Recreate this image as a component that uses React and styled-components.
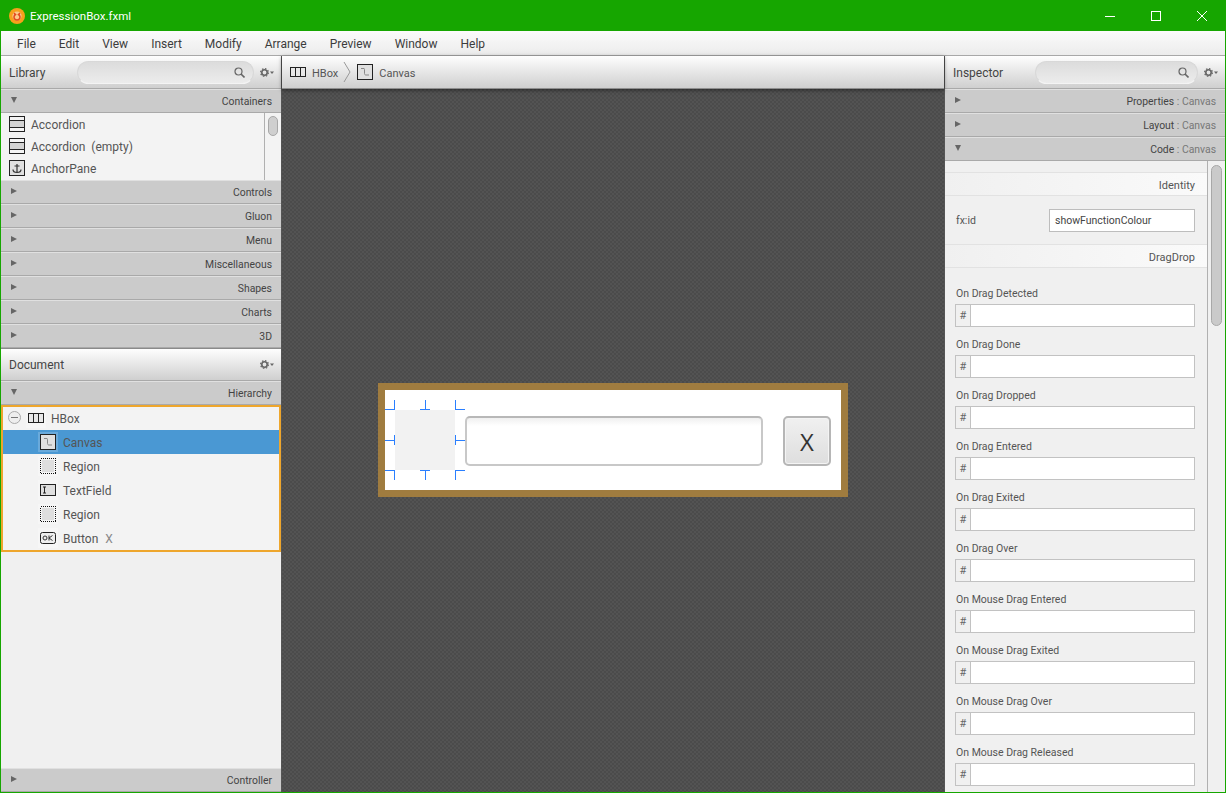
import React from "react";
import styled, { createGlobalStyle } from "styled-components";

const GlobalStyle = createGlobalStyle`
  html, body {
    margin: 0;
    padding: 0;
    height: 100%;
    overflow: hidden;
    font-family: Roboto, "Open Sans", sans-serif;
    font-size: 12px;
    color: #444;
  }
  * { box-sizing: border-box; }
`;

const MENU = ["File", "Edit", "View", "Insert", "Modify", "Arrange", "Preview", "Window", "Help"];
const LIBRARY_SECTIONS = ["Controls", "Gluon", "Menu", "Miscellaneous", "Shapes", "Charts", "3D"];
const EVENTS = [
  "On Drag Detected",
  "On Drag Done",
  "On Drag Dropped",
  "On Drag Entered",
  "On Drag Exited",
  "On Drag Over",
  "On Mouse Drag Entered",
  "On Mouse Drag Exited",
  "On Mouse Drag Over",
  "On Mouse Drag Released",
];

const Frame = ({ children }) => (
  <svg width="16" height="16" viewBox="0 0 16 16">
    <rect x="0.5" y="0.5" width="15" height="15" fill="#e0e0e0" stroke="#222" />
    {children}
  </svg>
);

const AccordionIcon = () => (
  <svg width="16" height="16" viewBox="0 0 16 16" shapeRendering="crispEdges">
    <rect x="0.5" y="0.5" width="15" height="15" fill="#f4f4f4" stroke="#222" />
    <rect x="1" y="5" width="14" height="6" fill="#d2d2d2" />
    <path d="M0 4.5h16M0 11.5h16" stroke="#222" />
  </svg>
);

const AnchorIcon = () => (
  <Frame>
    <path d="M8 4v8.5M5.5 6h5M4 9.5c0 2 2 3 4 3s4-1 4-3" fill="none" stroke="#333" strokeWidth="1.2" />
  </Frame>
);

const HBoxIcon = () => (
  <svg width="16" height="10" viewBox="0 0 16 10">
    <rect x="0.5" y="0.5" width="15" height="9" fill="#e8e8e8" stroke="#222" />
    <path d="M5.5 0v10M10.5 0v10" stroke="#222" />
  </svg>
);

const CanvasIcon = () => (
  <Frame>
    <path d="M4 4.5h3c.5 0 .5.5.5 1v4c0 1 .5 1.5 1.5 1.5h3" fill="none" stroke="#888" />
  </Frame>
);

const RegionIcon = () => (
  <svg width="16" height="16" viewBox="0 0 16 16" shapeRendering="crispEdges">
    <rect x="2" y="2" width="12" height="12" fill="#dedede" />
    <rect x="0.5" y="0.5" width="15" height="15" fill="none" stroke="#111" strokeDasharray="1 1" />
  </svg>
);

const TextFieldIcon = () => (
  <svg width="16" height="12" viewBox="0 0 16 12">
    <rect x="0.5" y="0.5" width="15" height="11" fill="#e0e0e0" stroke="#222" />
    <path d="M3 3h3M3 9h3M4.5 3v6" stroke="#222" />
  </svg>
);

const ButtonIcon = () => (
  <svg width="16" height="12" viewBox="0 0 16 12">
    <rect x="0.5" y="0.5" width="15" height="11" rx="2" fill="#eee" stroke="#222" />
    <circle cx="5" cy="6" r="2" fill="none" stroke="#333" />
    <path d="M9 3.5v5M12.5 3.5L9 6l3.5 2.5" fill="none" stroke="#333" />
  </svg>
);

const SearchIcon = () => (
  <svg width="11" height="11" viewBox="0 0 11 11">
    <circle cx="4.5" cy="4.5" r="3.5" fill="none" stroke="#666" strokeWidth="1.2" />
    <path d="M7 7l3.5 3.5" stroke="#666" strokeWidth="1.6" />
  </svg>
);

const GearIcon = () => (
  <svg width="14" height="9" viewBox="0 0 14 9">
    <circle cx="4.5" cy="4.5" r="2.7" fill="none" stroke="#666" strokeWidth="1.6" />
    <circle cx="4.5" cy="4.5" r="3.9" fill="none" stroke="#666" strokeWidth="1.2" strokeDasharray="1.5 1.56" />
    <path d="M10 3.5h4l-2 2.4z" fill="#666" />
  </svg>
);

const AppLogo = () => (
  <svg width="16" height="16" viewBox="0 0 16 16">
    <circle cx="8" cy="8" r="8" fill="#f7a01c" />
    <circle cx="8" cy="8" r="4.6" fill="#fbc98a" />
    <path d="M5 5l1.5 1.5a3 3 0 1 0 3 0L11 5" fill="none" stroke="#e2481e" strokeWidth="1.5" />
  </svg>
);

const WindowButton = ({ kind }) => (
  <svg width="12" height="12" viewBox="0 0 12 12">
    {kind === "min" && <path d="M1 6.5h10" stroke="#fff" />}
    {kind === "max" && <rect x="1.5" y="1.5" width="9" height="9" fill="none" stroke="#fff" />}
    {kind === "close" && <path d="M1 1l10 10M11 1L1 11" stroke="#fff" />}
  </svg>
);

const Section = ({ open, children }) => (
  <SectionBar>
    <Arrow $open={open} />
    <SectionTitle>{children}</SectionTitle>
  </SectionBar>
);

const SearchHeader = ({ title }) => (
  <PanelHeader>
    <SearchTitle>{title}</SearchTitle>
    <SearchPill>
      <SearchIcon />
    </SearchPill>
    <GearIcon />
  </PanelHeader>
);

const App = () => {
  return (
    <Window>
      <GlobalStyle />
      <TitleBar>
        <AppLogo />
        <WindowName>ExpressionBox.fxml</WindowName>
        <WindowButtons>
          <WindowButton kind="min" />
          <WindowButton kind="max" />
          <WindowButton kind="close" />
        </WindowButtons>
      </TitleBar>
      <MenuBar>
        {MENU.map((m) => (
          <span key={m}>{m}</span>
        ))}
      </MenuBar>
      <Workspace>
        <SidePanel>
          <SearchHeader title="Library" />
          <Section open>Containers</Section>
          <LibraryList>
            <LibraryItems>
              <LibraryItem><AccordionIcon />Accordion</LibraryItem>
              <LibraryItem><AccordionIcon />Accordion&nbsp; (empty)</LibraryItem>
              <LibraryItem><AnchorIcon />AnchorPane</LibraryItem>
            </LibraryItems>
            <ListScroll>
              <ListThumb />
            </ListScroll>
          </LibraryList>
          {LIBRARY_SECTIONS.map((s) => (
            <Section key={s}>{s}</Section>
          ))}
          <DocumentHeader>
            <PanelTitle>Document</PanelTitle>
            <GearIcon />
          </DocumentHeader>
          <Section open>Hierarchy</Section>
          <Tree>
            <RootRow>
              <Collapse />
              <TreeIcon><HBoxIcon /></TreeIcon>
              HBox
            </RootRow>
            <TreeRow $selected>
              <TreeIcon $selected><CanvasIcon /></TreeIcon>
              Canvas
            </TreeRow>
            <TreeRow>
              <TreeIcon><RegionIcon /></TreeIcon>
              Region
            </TreeRow>
            <TreeRow>
              <TreeIcon><TextFieldIcon /></TreeIcon>
              TextField
            </TreeRow>
            <TreeRow>
              <TreeIcon><RegionIcon /></TreeIcon>
              Region
            </TreeRow>
            <TreeRow>
              <TreeIcon><ButtonIcon /></TreeIcon>
              Button <TreeHint>X</TreeHint>
            </TreeRow>
          </Tree>
          <Spacer />
          <Section>Controller</Section>
        </SidePanel>

        <Center>
          <Breadcrumb>
            <CrumbIcon><HBoxIcon /></CrumbIcon>
            <span>HBox</span>
            <svg width="8" height="22" viewBox="0 0 8 22">
              <path d="M1 1l6 10-6 10" fill="none" stroke="#999" />
            </svg>
            <CrumbIcon><CanvasIcon /></CrumbIcon>
            <span>Canvas</span>
          </Breadcrumb>
          <Stage>
            <DesignRoot>
              <CanvasNode>
                <Handle $x="-10px" $y="-10px" $corner="tl" />
                <Handle $x="calc(50% - 5px)" $y="-10px" $corner="t" />
                <Handle $x="100%" $y="-10px" $corner="tr" />
                <Handle $x="-10px" $y="calc(50% - 5px)" $corner="l" />
                <Handle $x="100%" $y="calc(50% - 5px)" $corner="r" />
                <Handle $x="-10px" $y="100%" $corner="bl" />
                <Handle $x="calc(50% - 5px)" $y="100%" $corner="b" />
                <Handle $x="100%" $y="100%" $corner="br" />
              </CanvasNode>
              <DesignField />
              <DesignButton>X</DesignButton>
            </DesignRoot>
          </Stage>
        </Center>

        <SidePanel>
          <SearchHeader title="Inspector" />
          <Section>Properties <Dim>: Canvas</Dim></Section>
          <Section>Layout <Dim>: Canvas</Dim></Section>
          <Section open>Code <Dim>: Canvas</Dim></Section>
          <InspectorBody>
            <InspectorContent>
              <Band>Identity</Band>
              <IdRow>
                <span>fx:id</span>
                <IdInput>showFunctionColour</IdInput>
              </IdRow>
              <Band>DragDrop</Band>
              <EventList>
                {EVENTS.map((e) => (
                  <EventField key={e}>
                    <span>{e}</span>
                    <HashInput>
                      <Hash>#</Hash>
                    </HashInput>
                  </EventField>
                ))}
              </EventList>
            </InspectorContent>
            <InspectorScroll>
              <InspectorThumb />
            </InspectorScroll>
          </InspectorBody>
        </SidePanel>
      </Workspace>
    </Window>
  );
};

export default App;

const Window = styled.div`
  display: flex;
  flex-direction: column;
  width: 1226px;
  height: 793px;
  overflow: hidden;
  border: 1px solid #16a600;
  border-top: 0;
  background: #f0f0f0;
`;

const TitleBar = styled.div`
  display: flex;
  align-items: center;
  flex: 0 0 31px;
  margin: 0 -1px;
  padding-left: 9px;
  background: #16a600;
`;

const WindowName = styled.span`
  margin-left: 5px;
  font-size: 11.5px;
  color: #fff;
`;

const WindowButtons = styled.div`
  display: flex;
  gap: 34px;
  margin-left: auto;
  margin-right: 18px;
`;

const MenuBar = styled.div`
  display: flex;
  align-items: center;
  flex: 0 0 25px;
  gap: 23px;
  padding: 2px 0 0 16px;
  font-size: 12px;
  color: #3c3c3c;
  background: linear-gradient(#fbfbfb, #ececec);
  border-bottom: 1px solid #a8a8a8;
`;

const Workspace = styled.div`
  display: grid;
  grid-template-columns: 280px 1fr 280px;
  flex: 1;
  min-height: 0;
`;

const SidePanel = styled.div`
  display: flex;
  flex-direction: column;
  min-height: 0;
  background: #f0f0f0;
`;

const PanelHeader = styled.div`
  display: flex;
  align-items: center;
  flex: 0 0 33px;
  padding: 0 7px 0 8px;
  background: linear-gradient(#fefefe, #cfcfcf);
  border-bottom: 1px solid #a9a9a9;
`;

const DocumentHeader = styled(PanelHeader)`
  justify-content: space-between;
  flex-basis: 33px;
  border-top: 1px solid #8a8a8a;
`;

const PanelTitle = styled.span`
  font-size: 12px;
  color: #444;
`;

const SearchTitle = styled(PanelTitle)`
  padding-top: 2px;
`;

const SearchPill = styled.div`
  display: flex;
  align-items: center;
  justify-content: flex-end;
  flex: 1;
  height: 23px;
  margin: 0 6px 0 32px;
  padding-right: 8px;
  border-radius: 12px;
  border: 1px solid #d8d8d8;
  border-bottom-color: #f4f4f4;
  background: linear-gradient(#dcdcdc, #ececec);
`;

const SectionBar = styled.div`
  display: flex;
  align-items: center;
  flex: 0 0 24px;
  padding: 0 9px 0 10px;
  background: #cbcbcb;
  border-top: 1px solid #e0e0e0;
  border-bottom: 1px solid #a9a9a9;
`;

const Arrow = styled.span`
  width: 0;
  height: 0;
  margin-top: -2px;
  ${(props) =>
    props.$open
      ? `border-left: 3.5px solid transparent; border-right: 3.5px solid transparent; border-top: 6px solid #666;`
      : `border-top: 3.5px solid transparent; border-bottom: 3.5px solid transparent; border-left: 6px solid #666;`}
`;

const SectionTitle = styled.span`
  margin-left: auto;
  font-size: 10.4px;
  color: #444;
`;

const Dim = styled.span`
  color: #777;
`;

const LibraryList = styled.div`
  display: flex;
  flex: 0 0 67px;
  overflow: hidden;
  background: #f3f3f3;
`;

const LibraryItems = styled.div`
  flex: 1;
`;

const LibraryItem = styled.div`
  display: flex;
  align-items: center;
  gap: 6px;
  height: 22px;
  padding: 2px 0 0 8px;
  color: #555;

  & > svg {
    margin-top: -2px;
  }
`;

const ListScroll = styled.div`
  flex: 0 0 17px;
  padding: 3px 0 0 3px;
  border-left: 1px solid #b0b0b0;
`;

const ListThumb = styled.div`
  width: 10px;
  height: 20px;
  border-radius: 5px;
  background: #cfcfcf;
  border: 1px solid #a8a8a8;
`;

const Tree = styled.div`
  display: flex;
  flex-direction: column;
  flex: 0 0 147px;
  border: 2px solid #eea62c;
  background: #f3f3f3;
`;

const TreeRow = styled.div`
  display: flex;
  align-items: center;
  flex: 0 0 24px;
  gap: 5px;
  padding: 2px 0 0 35px;
  color: #555;
  background: ${(props) => (props.$selected ? "#4a98d3" : "transparent")};
`;

const RootRow = styled(TreeRow)`
  flex-basis: 23px;
  padding: 0 0 0 5px;
`;

const TreeIcon = styled.span`
  display: flex;
  align-items: center;
  justify-content: center;
  width: 20px;
  height: 20px;
  margin-top: -2px;
  background: ${(props) => (props.$selected ? "#6aaadb" : "#f6f6f6")};
`;

const TreeHint = styled.span`
  margin-left: 2px;
  color: #888;
`;

const Collapse = styled.span`
  position: relative;
  width: 13px;
  height: 13px;
  margin-top: -2px;
  border: 1px solid #aaa;
  border-radius: 50%;
  background: #eee;

  &::after {
    content: "";
    position: absolute;
    left: 2px;
    right: 2px;
    top: 5px;
    height: 1px;
    background: #777;
  }
`;

const Spacer = styled.div`
  flex: 1;
`;

const Center = styled.div`
  display: flex;
  flex-direction: column;
  min-width: 0;
  border-left: 1px solid #555;
  border-right: 1px solid #555;
`;

const Breadcrumb = styled.div`
  display: flex;
  align-items: center;
  flex: 0 0 33px;
  gap: 5px;
  padding-left: 7px;
  font-size: 11px;
  color: #555;
  background: linear-gradient(#fefefe, #cfcfcf);
  border-bottom: 1px solid #8e8e8e;
  box-shadow: 0 1px 4px rgba(0, 0, 0, 0.5);
  z-index: 1;

  & > span:not([class]) {
    padding-top: 2px;
  }
`;

const CrumbIcon = styled.span`
  display: flex;
  align-items: center;
  justify-content: center;
  width: 18px;
  height: 18px;
`;

const Stage = styled.div`
  display: flex;
  align-items: center;
  justify-content: center;
  flex: 1;
  padding-bottom: 1px;
  background-color: #4f4f4f;
  background-image: repeating-conic-gradient(#535353 0 25%, #4b4b4b 0 50%);
  background-size: 4px 4px;
`;

const DesignRoot = styled.div`
  display: flex;
  align-items: center;
  width: 470px;
  height: 114px;
  padding: 0 7px 0 10px;
  border: 7px solid #a07c3f;
  background: #fff;
`;

const CanvasNode = styled.div`
  position: relative;
  flex: 0 0 60px;
  height: 60px;
  margin-right: 10px;
  background: #f2f2f2;
`;

const Handle = styled.span`
  position: absolute;
  left: ${(props) => props.$x};
  top: ${(props) => props.$y};
  width: 10px;
  height: 10px;
  ${(props) =>
    ({
      tl: `border-right: 1px solid #2a7fff; border-bottom: 1px solid #2a7fff;`,
      tr: `border-left: 1px solid #2a7fff; border-bottom: 1px solid #2a7fff;`,
      bl: `border-right: 1px solid #2a7fff; border-top: 1px solid #2a7fff;`,
      br: `border-left: 1px solid #2a7fff; border-top: 1px solid #2a7fff;`,
      t: `border-bottom: 1px solid #2a7fff; background: linear-gradient(#2a7fff, #2a7fff) center / 1px 100% no-repeat;`,
      b: `border-top: 1px solid #2a7fff; background: linear-gradient(#2a7fff, #2a7fff) center / 1px 100% no-repeat;`,
      l: `border-right: 1px solid #2a7fff; background: linear-gradient(#2a7fff, #2a7fff) center / 100% 1px no-repeat;`,
      r: `border-left: 1px solid #2a7fff; background: linear-gradient(#2a7fff, #2a7fff) center / 100% 1px no-repeat;`,
    })[props.$corner]}
`;

const DesignField = styled.div`
  flex: 0 0 298px;
  height: 50px;
  margin: 2px 20px 0 0;
  border: 2px solid #c8c8c8;
  border-top-color: #b8b8b8;
  border-radius: 5px;
  background: linear-gradient(#f0f0f0, #fff 8px);
`;

const DesignButton = styled.div`
  display: flex;
  align-items: center;
  justify-content: center;
  flex: 0 0 48px;
  height: 50px;
  margin-top: 2px;
  font-family: "Open Sans", sans-serif;
  font-size: 24px;
  color: #333;
  border: 2px solid #b6b6b6;
  border-radius: 5px;
  background: linear-gradient(#f0f0f0, #dedede);
  box-shadow: inset 0 0 0 1px #f4f4f4;
`;

const InspectorBody = styled.div`
  display: flex;
  flex: 1;
  min-height: 0;
  overflow: hidden;
`;

const InspectorContent = styled.div`
  flex: 1;
  min-width: 0;
  padding-top: 11px;
`;

const Band = styled.div`
  display: flex;
  align-items: center;
  justify-content: flex-end;
  height: 24px;
  padding: 2px 12px 0 0;
  color: #555;
  font-size: 11px;
  border-top: 1px solid #e2e2e2;
  border-bottom: 1px solid #e2e2e2;
  background: linear-gradient(90deg, #f0f0f0, #fafafa);
`;

const IdRow = styled.div`
  display: flex;
  align-items: center;
  justify-content: space-between;
  height: 48px;
  padding: 0 12px 0 11px;
  font-size: 10.5px;
  color: #555;
`;

const IdInput = styled.div`
  display: flex;
  align-items: center;
  width: 146px;
  height: 23px;
  padding-left: 5px;
  font-size: 10.5px;
  color: #444;
  background: #fff;
  border: 1px solid #bdbdbd;
`;

const EventList = styled.div`
  display: flex;
  flex-direction: column;
  gap: 9px;
  padding: 17px 12px 0 10px;
`;

const EventField = styled.div`
  display: flex;
  flex-direction: column;
  gap: 2px;
  font-size: 10.5px;
  color: #555;

  & > span:first-child {
    margin-left: 1px;
    line-height: 17px;
  }
`;

const HashInput = styled.div`
  display: flex;
  height: 23px;
  background: #fff;
  border: 1px solid #c2c2c2;
`;

const Hash = styled.span`
  display: flex;
  align-items: center;
  justify-content: center;
  flex: 0 0 15px;
  font-size: 11px;
  color: #666;
  background: #f0f0f0;
  border-right: 1px solid #c2c2c2;
`;

const InspectorScroll = styled.div`
  flex: 0 0 18px;
  padding: 4px 0 0 3px;
  border-left: 1px solid #b0b0b0;
`;

const InspectorThumb = styled.div`
  width: 11px;
  height: 161px;
  border-radius: 6px;
  background: #cacaca;
  border: 1px solid #a8a8a8;
`;
